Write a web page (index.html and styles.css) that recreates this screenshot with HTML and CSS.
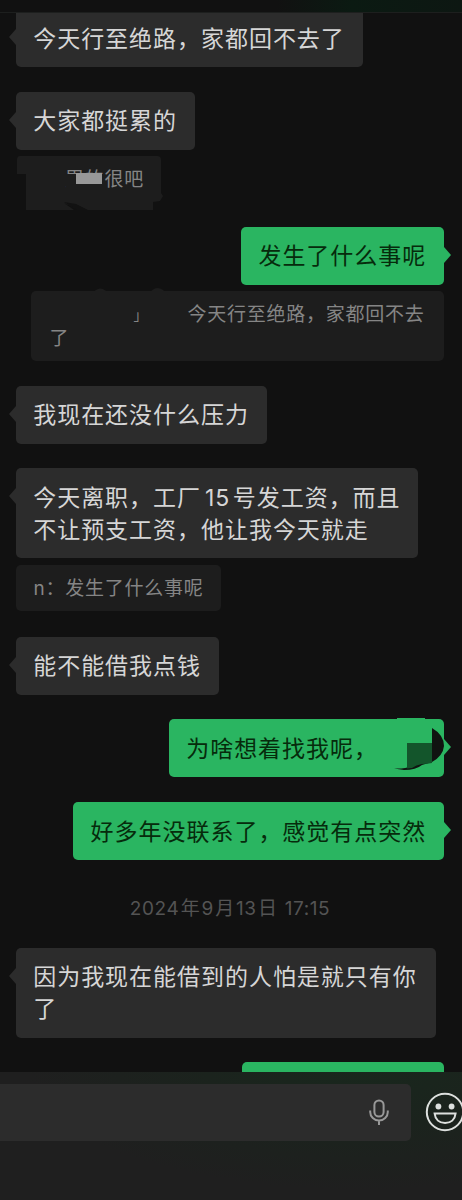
FILE: index.html
```html
<!DOCTYPE html>
<html lang="zh-CN">
<head>
    <meta charset="UTF-8">
    <meta name="viewport" content="width=device-width, initial-scale=1.0">
    <title>聊天</title>
    <link rel="stylesheet" href="styles.css">
</head>
<body>
    <div class="header"></div>

    <div class="chat">
        <div class="message first">
            <div class="bubble">今天行至绝路，家都回不去了</div>
        </div>

        <div class="message">
            <div class="bubble">大家都挺累的</div>
            <div class="quote smudged">
                <svg class="smudge-back" width="152" height="70" viewBox="0 0 152 70">
                    <path d="M4 0H141Q145 0 145 4V37L147 40L144 45L137 46V54H64L48 47L58 54H10V18H1V4Q1 0 4 0Z" fill="#1d1d1d"/>
                    <path d="M48 46L60 48L72 54H61Z" fill="#121212"/>
                </svg>
                <span class="quote-text">累的很吧</span>
                <svg class="smudge-front" width="38" height="18" viewBox="0 0 38 18">
                    <path d="M0 3H38V18H0Z" fill="#1d1d1d"/>
                    <path d="M10 2H36V13H10Z" fill="#989898"/>
                </svg>
            </div>
        </div>

        <div class="message mine">
            <div class="bubble">发生了什么事呢</div>
            <div class="quote wide">
                <svg class="bumps" width="90" height="8" viewBox="0 0 90 8">
                    <path d="M0 8Q9 -5 19 8ZM57 8Q66 -6 77 8Z" fill="#1d1d1d"/>
                </svg>
                <div class="quote-line"><span class="erased">」</span><span>今天行至绝路，家都回不去</span></div>
                <div class="quote-line">了</div>
            </div>
        </div>

        <div class="message">
            <div class="bubble">我现在还没什么压力</div>
        </div>

        <div class="message">
            <div class="bubble">今天离职，工厂<span class="num">15</span>号发工资，而且<br>不让预支工资，他让我今天就走</div>
            <div class="quote short">n：发生了什么事呢</div>
        </div>

        <div class="message">
            <div class="bubble">能不能借我点钱</div>
        </div>

        <div class="message mine">
            <div class="bubble name-hidden">为啥想着找我呢，
                <svg class="scribble" width="60" height="56" viewBox="0 0 60 56">
                    <path d="M7 2V0H35V2Z" fill="#2ab561"/>
                    <path d="M42 10Q54 17 54 28Q53 38 42 44L32 47Q26 52 14 52L4 50.5Q15 51 22 48Q29 44 42 43Z" fill="#101411"/>
                    <path d="M17 25H42V45Q37 46 32 46Q26 47 22 50L17 50.5Z" fill="#13552b"/>
                </svg>
            </div>
        </div>

        <div class="message mine">
            <div class="bubble">好多年没联系了，感觉有点突然</div>
        </div>

        <div class="time">2024<span>年</span>9<span>月</span>13<span>日</span> 17:15</div>

        <div class="message">
            <div class="bubble">因为我现在能借到的人怕是就只有你了</div>
        </div>

        <div class="message mine">
            <div class="bubble cut"></div>
        </div>
    </div>

    <div class="input-bar">
        <div class="input-box">
            <svg width="20" height="27" viewBox="0 0 20 27" fill="none" stroke="#989898" stroke-width="2">
                <rect x="5.4" y="1.4" width="9.2" height="16.2" rx="4.6"/>
                <path d="M1.2 11.5V13A8.8 8.6 0 0 0 18.8 13V11.5M10 21.5V26"/>
            </svg>
        </div>
        <svg class="emoji" width="40" height="40" viewBox="0 0 40 40" fill="none" stroke="#dde0de" stroke-width="2">
            <circle cx="20" cy="20" r="18.2"/>
            <circle cx="13.4" cy="14.5" r="2.9" fill="#dde0de" stroke="none"/>
            <circle cx="26.6" cy="14.5" r="2.9" fill="#dde0de" stroke="none"/>
            <path d="M9.6 21.4H30.6C30 27.5 25.8 31 20.1 31S10.2 27.5 9.6 21.4Z"/>
        </svg>
    </div>
</body>
</html>
```

FILE: styles.css
```css
* {
    box-sizing: border-box;
}

body {
    margin: 0;
    height: 1200px;
    display: flex;
    flex-direction: column;
    overflow: hidden;
    background-color: #111111;
    color: #d6d6d6;
    font-family: "Inter", "Noto Sans CJK SC", sans-serif;
}

.header {
    height: 13px;
    flex-shrink: 0;
    background: linear-gradient(90deg, #111111 60%, #0b1a12 76%, #0d1712 100%);
    border-bottom: 1px solid #1d1f1e;
}

/* Message list */
.chat {
    height: 1059px;
    flex-shrink: 0;
    overflow: hidden;
    padding: 0 18px 0 16px;
    display: flex;
    flex-direction: column;
    gap: 24.6px;
}

.message {
    display: flex;
    flex-direction: column;
    align-items: flex-start;
    flex-shrink: 0;
}

.message.first {
    margin-top: -4px;
}

.message.mine {
    align-items: flex-end;
}

.bubble {
    position: relative;
    max-width: 419.5px;
    min-height: 58px;
    padding: 13.7px 17.8px 12.3px 17.2px;
    border-radius: 5px;
    background-color: #2c2c2c;
    font-size: 23px;
    line-height: 32px;
    letter-spacing: 0.97px;
}

.bubble::before {
    content: "";
    position: absolute;
    top: 20px;
    left: -7px;
    border-style: solid;
    border-width: 8.5px 7px 8.5px 0;
    border-color: transparent #2c2c2c;
}

.mine .bubble {
    background-color: #2ab561;
    color: #062b0c;
}

.mine .bubble::before {
    left: auto;
    right: -7px;
    border-width: 8.5px 0 8.5px 7px;
    border-color: transparent #2ab561;
}

.num {
    margin: 0 2.5px 0 4px;
}

/* Quoted messages */
.quote {
    position: relative;
    margin-top: 6.5px;
    padding: 12px 18px 10px;
    border-radius: 5px;
    background-color: #1d1d1d;
    color: #858585;
    font-size: 19px;
    line-height: 24px;
    letter-spacing: 0.75px;
}

.quote.short {
    margin-top: 7px;
    margin-bottom: 0.7px;
    padding-left: 17.5px;
}

.quote.wide {
    width: 413px;
    padding: 12px 16px 10px 18.5px;
}

.quote-line {
    display: flex;
    white-space: nowrap;
}

.erased {
    width: 138px;
    padding-left: 84px;
    font-size: 14px;
}

.bumps {
    position: absolute;
    top: -4px;
    left: 60px;
}

.quote.smudged {
    height: 46px;
    margin-bottom: 24px;
    padding: 12px 18px 10px 49px;
    background: none;
}

.message:has(.smudged) {
    height: 110.5px;
}

.smudge-back {
    position: absolute;
    top: 0;
    left: 0;
}

.quote-text {
    position: relative;
}

.smudge-front {
    position: absolute;
    top: 15px;
    left: 50px;
}

/* Name painted over */
.name-hidden {
    width: 275px;
}

.scribble {
    position: absolute;
    top: -1px;
    right: -6px;
}

.time {
    height: 38px;
    flex-shrink: 0;
    margin: 5px 0 -4.5px;
    color: #545454;
    font-size: 19px;
    line-height: 40px;
    letter-spacing: 0.6px;
    text-align: center;
}

.time span {
    margin: 0 1px 0 1.5px;
}

.bubble.cut {
    width: 202.5px;
}

.bubble.cut::before {
    display: none;
}

/* Input bar */
.input-bar {
    flex: 1;
    display: flex;
    align-items: flex-start;
    padding-top: 12px;
    background: radial-gradient(ellipse at 78% 0, #19271d 0, #1b231d 30%, #1f1f1f 65%);
}

.input-box {
    width: 411px;
    height: 57px;
    flex-shrink: 0;
    display: flex;
    align-items: center;
    justify-content: flex-end;
    padding-right: 22px;
    border-radius: 0 5px 5px 0;
    background-color: #2c2c2c;
}

.emoji {
    flex-shrink: 0;
    margin: 8px 0 0 14px;
}
```
